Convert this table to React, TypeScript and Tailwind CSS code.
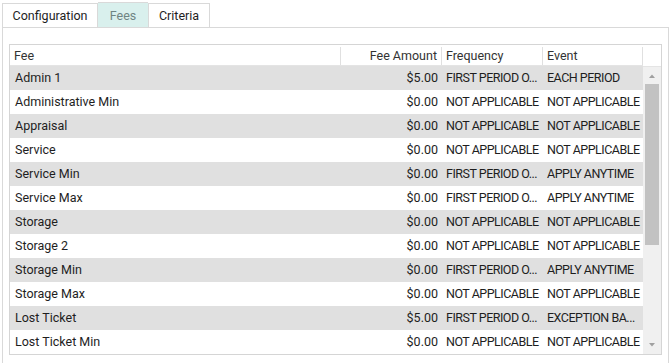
const rows: [string, string, string, string][] = [
  ['Admin 1', '$5.00', 'FIRST PERIOD O...', 'EACH PERIOD'],
  ['Administrative Min', '$0.00', 'NOT APPLICABLE', 'NOT APPLICABLE'],
  ['Appraisal', '$0.00', 'NOT APPLICABLE', 'NOT APPLICABLE'],
  ['Service', '$0.00', 'NOT APPLICABLE', 'NOT APPLICABLE'],
  ['Service Min', '$0.00', 'FIRST PERIOD O...', 'APPLY ANYTIME'],
  ['Service Max', '$0.00', 'FIRST PERIOD O...', 'APPLY ANYTIME'],
  ['Storage', '$0.00', 'NOT APPLICABLE', 'NOT APPLICABLE'],
  ['Storage 2', '$0.00', 'NOT APPLICABLE', 'NOT APPLICABLE'],
  ['Storage Min', '$0.00', 'FIRST PERIOD O...', 'APPLY ANYTIME'],
  ['Storage Max', '$0.00', 'NOT APPLICABLE', 'NOT APPLICABLE'],
  ['Lost Ticket', '$5.00', 'FIRST PERIOD O...', 'EXCEPTION BA...'],
  ['Lost Ticket Min', '$0.00', 'NOT APPLICABLE', 'NOT APPLICABLE'],
]

export default function App() {
  return (
    <div
      className="w-[670px] h-[363px] bg-white overflow-hidden text-[12.5px] text-[#1e1e1e]"
      style={{ fontFamily: 'Roboto, "Noto Sans", sans-serif' }}
    >
      {/* tabs */}
      <div className="flex items-end h-[27px] pl-[2px]">
        <div className="h-[24px] w-[96px] pt-[2px] flex items-center justify-center border border-b-0 border-[#d9d9d9]">Configuration</div>
        <div className="h-[25px] w-[50px] pt-[2px] flex items-center justify-center bg-[#d9f0ed] text-[#6f8583] border-t border-[#d9d9d9]">Fees</div>
        <div className="h-[24px] w-[62px] pt-[2px] flex items-center justify-center border border-b-0 border-[#d9d9d9]">Criteria</div>
      </div>

      {/* panel */}
      <div className="ml-[2px] w-[667px] h-[336px] border-l border-r border-t border-[#d9d9d9] pt-[16px] pl-[6px]">
        <div className="w-[653px] border border-[#d5d5d5] flex">
          <div className="w-[633px]">
            <div className="flex h-[21px] pt-[2px] border-b border-[#e4e4e4] text-[#333]">
              <div className="w-[331px] pl-[4px] flex items-center border-r border-[#e0e0e0]">Fee</div>
              <div className="w-[101px] pr-[4px] flex items-center justify-end border-r border-[#e0e0e0]">Fee Amount</div>
              <div className="w-[101px] pl-[4px] flex items-center border-r border-[#e0e0e0]">Frequency</div>
              <div className="w-[100px] pl-[4px] flex items-center border-r border-[#e0e0e0]">Event</div>
            </div>
            {rows.map((r, i) => (
              <div key={r[0]} className={`flex h-[24px] items-center ${i % 2 === 0 ? 'bg-[#e0e0e0]' : 'bg-white'}`}>
                <div className="w-[331px] pl-[5px] whitespace-nowrap">{r[0]}</div>
                <div className="w-[101px] pr-[4px] text-right">{r[1]}</div>
                <div className="w-[101px] pl-[4px] whitespace-nowrap tracking-[-0.5px]">{r[2]}</div>
                <div className="w-[100px] pl-[4px] whitespace-nowrap tracking-[-0.5px]">{r[3]}</div>
              </div>
            ))}
          </div>
          <div className="w-[18px] flex flex-col">
            <div className="h-[22px] border-b border-[#e4e4e4]" />
            <div className="flex-1 bg-[#f0f0f0] flex flex-col items-center">
              <svg width="18" height="17" viewBox="0 0 18 17">
                <path d="M6 11 L9 7.5 L12 11 Z" fill="#a0a0a0" />
              </svg>
              <div className="w-[14px] h-[161px] bg-[#c2c2c2]" />
              <div className="flex-1" />
              <svg width="18" height="17" viewBox="0 0 18 17">
                <path d="M6 6 L9 9.5 L12 6 Z" fill="#a0a0a0" />
              </svg>
            </div>
          </div>
        </div>
      </div>
    </div>
  )
}
